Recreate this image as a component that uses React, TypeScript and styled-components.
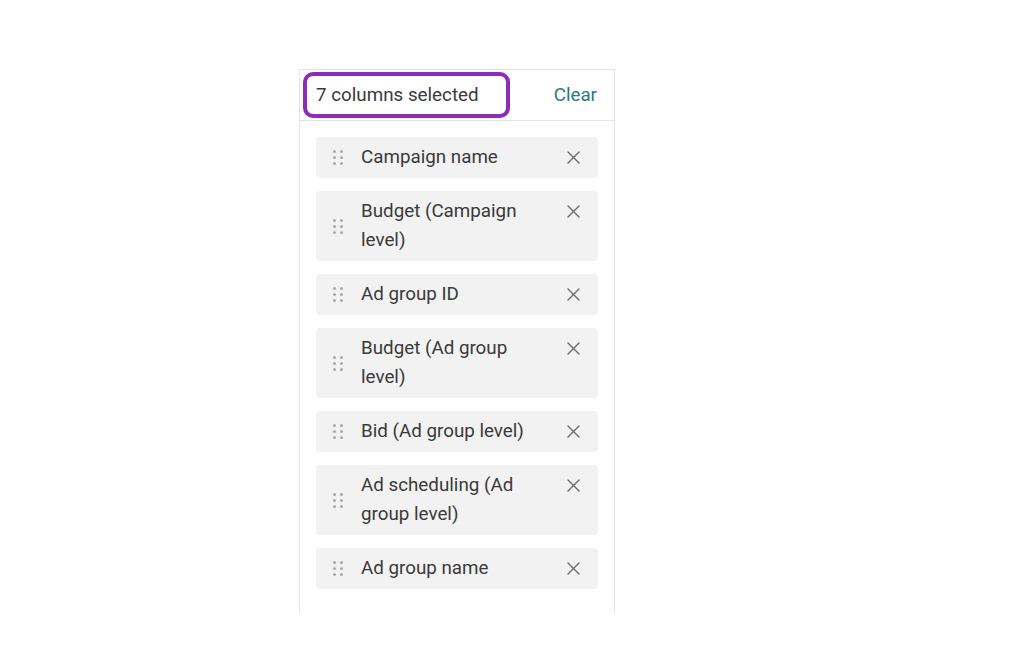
import React from "react";
import styled, { createGlobalStyle } from "styled-components";

const GlobalStyle = createGlobalStyle`
  html, body {
    margin: 0;
    padding: 0;
    background: #ffffff;
  }
  body {
    font-family: Roboto, "Liberation Sans", Arial, sans-serif;
  }
`;

const Page = styled.div`
  width: 1024px;
  height: 646px;
  display: flex;
  justify-content: flex-start;
  padding-left: 299px;
  padding-top: 69px;
  box-sizing: border-box;
  overflow: hidden;
`;

const Panel = styled.div`
  width: 316px;
  height: 544px;
  box-sizing: border-box;
  border: 1px solid #e4e4e4;
  border-bottom: none;
  display: flex;
  flex-direction: column;
  background: #fff;
`;

const Header = styled.div`
  height: 51px;
  box-sizing: border-box;
  border-bottom: 1px solid #e4e4e4;
  display: flex;
  align-items: center;
  justify-content: space-between;
  padding: 0 17px 0 3px;
`;

const Count = styled.span`
  box-sizing: border-box;
  width: 207px;
  height: 46px;
  border: 4px solid #8c2cb8;
  border-radius: 10px;
  display: flex;
  align-items: center;
  padding-left: 9px;
  font-size: 18.8px;
  color: #3a3a3a;
`;

const ClearButton = styled.button`
  border: none;
  background: none;
  padding: 0;
  font-family: inherit;
  font-size: 18.8px;
  color: #2b7a86;
  cursor: pointer;
`;

const List = styled.div`
  display: flex;
  flex-direction: column;
  gap: 13px;
  padding: 16px 16px;
`;

const Item = styled.div`
  display: flex;
  align-items: flex-start;
  background: #f2f2f2;
  border-radius: 4px;
  padding: 6px 18px 6px 17px;
  min-height: 29px;
`;

const Handle = styled.div`
  align-self: center;
  display: grid;
  grid-template-columns: repeat(2, 3px);
  grid-auto-rows: 3px;
  column-gap: 4px;
  row-gap: 3px;
  width: 10px;
  margin-right: 18px;
`;

const Dot = styled.span`
  width: 3px;
  height: 3px;
  border-radius: 50%;
  background: #a9a9a9;
`;

const Label = styled.span`
  flex: 1;
  font-size: 18.8px;
  line-height: 29px;
  color: #3a3a3a;
  padding-right: 20px;
`;

const Remove = styled.button`
  border: none;
  background: none;
  padding: 0;
  height: 29px;
  width: 13px;
  display: flex;
  align-items: center;
  justify-content: center;
  cursor: pointer;
`;

const columns = [
  "Campaign name",
  "Budget (Campaign level)",
  "Ad group ID",
  "Budget (Ad group level)",
  "Bid (Ad group level)",
  "Ad scheduling (Ad group level)",
  "Ad group name",
];

function CloseIcon() {
  return (
    <svg width="13" height="13" viewBox="0 0 13 13">
      <path d="M1 1 L12 12 M12 1 L1 12" stroke="#6b6b6b" strokeWidth="1.4" strokeLinecap="round" />
    </svg>
  );
}

export default function App() {
  return (
    <Page>
      <GlobalStyle />
      <Panel>
        <Header>
          <Count>{columns.length} columns selected</Count>
          <ClearButton>Clear</ClearButton>
        </Header>
        <List>
          {columns.map((c) => (
            <Item key={c}>
              <Handle>
                {Array.from({ length: 6 }).map((_, i) => (
                  <Dot key={i} />
                ))}
              </Handle>
              <Label>{c}</Label>
              <Remove aria-label="Remove">
                <CloseIcon />
              </Remove>
            </Item>
          ))}
        </List>
      </Panel>
    </Page>
  );
}
